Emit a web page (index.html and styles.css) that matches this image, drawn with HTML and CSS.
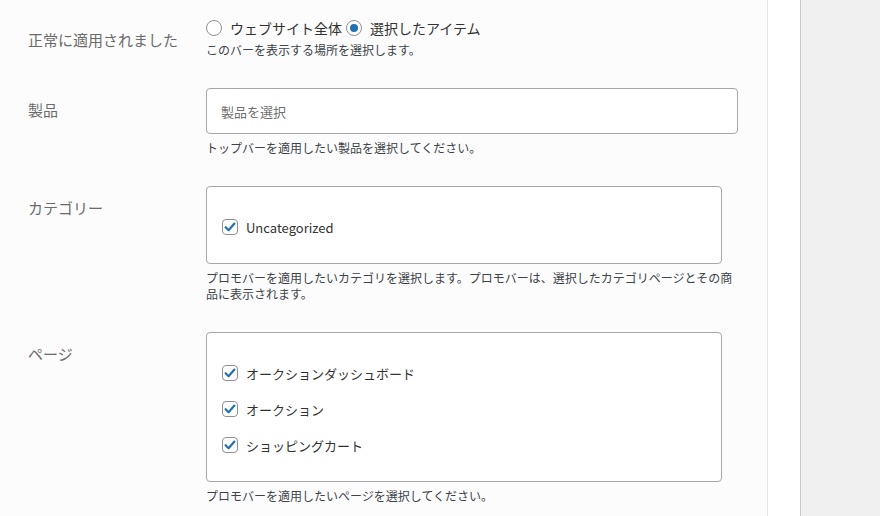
FILE: index.html
```html
<!DOCTYPE html>
<html lang="ja">
<head>
  <meta charset="UTF-8" />
  <meta name="viewport" content="width=device-width, initial-scale=1.0"/>
  <title>トップバー設定</title>
  <link rel="stylesheet" href="styles.css">
</head>
<body>
  <div class="layout">
    <main class="settings">
      <div class="row">
        <div class="row-label">正常に適用されました</div>
        <div class="row-field">
          <div class="radios">
            <label class="radio"><span class="radio-dot"></span>ウェブサイト全体</label>
            <label class="radio"><span class="radio-dot checked"></span>選択したアイテム</label>
          </div>
          <p class="description description-tight">このバーを表示する場所を選択します。</p>
        </div>
      </div>

      <div class="row">
        <div class="row-label">製品</div>
        <div class="row-field">
          <input class="select-box" type="text" placeholder="製品を選択" />
          <p class="description">トップバーを適用したい製品を選択してください。</p>
        </div>
      </div>

      <div class="row">
        <div class="row-label">カテゴリー</div>
        <div class="row-field">
          <div class="check-box">
            <label class="check">
              <svg class="check-icon" width="16" height="16" viewBox="0 0 16 16"><rect x="0.5" y="0.5" width="15" height="15" rx="3.5" fill="#fff" stroke="#8c8f94"/><path d="M3.6 8.2 L6.6 11.2 L12.4 4.6" fill="none" stroke="#2271b1" stroke-width="2.2" stroke-linecap="round" stroke-linejoin="round"/></svg>
              Uncategorized
            </label>
          </div>
          <p class="description">プロモバーを適用したいカテゴリを選択します。プロモバーは、選択したカテゴリページとその商品に表示されます。</p>
        </div>
      </div>

      <div class="row">
        <div class="row-label">ページ</div>
        <div class="row-field">
          <div class="check-box">
            <label class="check">
              <svg class="check-icon" width="16" height="16" viewBox="0 0 16 16"><rect x="0.5" y="0.5" width="15" height="15" rx="3.5" fill="#fff" stroke="#8c8f94"/><path d="M3.6 8.2 L6.6 11.2 L12.4 4.6" fill="none" stroke="#2271b1" stroke-width="2.2" stroke-linecap="round" stroke-linejoin="round"/></svg>
              オークションダッシュボード
            </label>
            <label class="check">
              <svg class="check-icon" width="16" height="16" viewBox="0 0 16 16"><rect x="0.5" y="0.5" width="15" height="15" rx="3.5" fill="#fff" stroke="#8c8f94"/><path d="M3.6 8.2 L6.6 11.2 L12.4 4.6" fill="none" stroke="#2271b1" stroke-width="2.2" stroke-linecap="round" stroke-linejoin="round"/></svg>
              オークション
            </label>
            <label class="check">
              <svg class="check-icon" width="16" height="16" viewBox="0 0 16 16"><rect x="0.5" y="0.5" width="15" height="15" rx="3.5" fill="#fff" stroke="#8c8f94"/><path d="M3.6 8.2 L6.6 11.2 L12.4 4.6" fill="none" stroke="#2271b1" stroke-width="2.2" stroke-linecap="round" stroke-linejoin="round"/></svg>
              ショッピングカート
            </label>
          </div>
          <p class="description">プロモバーを適用したいページを選択してください。</p>
        </div>
      </div>
    </main>
    <div class="strip"></div>
    <aside class="sidebar"></aside>
  </div>
</body>
</html>
```

FILE: styles.css
```css
body {
  margin: 0;
  font-family: "Noto Sans CJK JP", "Noto Sans", sans-serif;
  color: #2c3338;
  overflow: hidden;
}
.layout {
  display: flex;
  height: 100vh;
}
.settings {
  width: 768px;
  background: #fcfcfc;
  border-right: 1px solid #e5e5e5;
  padding: 3px 0 0 28px;
  box-sizing: border-box;
}
.strip {
  width: 32px;
  background: #fff;
  border-right: 1px solid #c8c8c8;
}
.sidebar {
  flex: 1;
  background: #f0f0f0;
}
.row {
  display: flex;
  padding: 15px 0;
}
.row-label {
  width: 178px;
  flex-shrink: 0;
  padding-top: 12px;
  font-size: 15px;
  line-height: 20px;
  color: #6b6b6b;
}
.row-field {
  width: 532px;
}
.radios {
  display: flex;
  align-items: center;
  height: 20px;
  font-size: 14px;
  gap: 4px;
}
.radio {
  display: flex;
  align-items: center;
  gap: 8px;
  color: #333;
}
.radio-dot {
  width: 14px;
  height: 14px;
  border: 1px solid #8c8f94;
  border-radius: 50%;
  background: #fff;
  display: flex;
  align-items: center;
  justify-content: center;
}
.radio-dot.checked::before {
  content: "";
  width: 8px;
  height: 8px;
  border-radius: 50%;
  background: #2271b1;
}
.description {
  margin: 6px 0 0;
  font-size: 12px;
  line-height: 16px;
  color: #3c434a;
}
.description-tight {
  margin-top: 4px;
}
.select-box {
  display: block;
  width: 532px;
  height: 46px;
  box-sizing: border-box;
  margin: 0;
  padding: 0 14px;
  border: 1px solid #a7a7a7;
  border-radius: 4px;
  background: #fff;
  font-family: inherit;
  font-size: 13px;
}
.select-box::placeholder {
  color: #707070;
}
.check-box {
  width: 516px;
  box-sizing: border-box;
  padding: 22px 15px 18px;
  border: 1px solid #a7a7a7;
  border-radius: 4px;
  background: #fff;
}
.check {
  display: flex;
  align-items: center;
  gap: 8px;
  height: 36px;
  font-size: 13px;
  color: #333;
}
.check-icon {
  flex-shrink: 0;
}
```
